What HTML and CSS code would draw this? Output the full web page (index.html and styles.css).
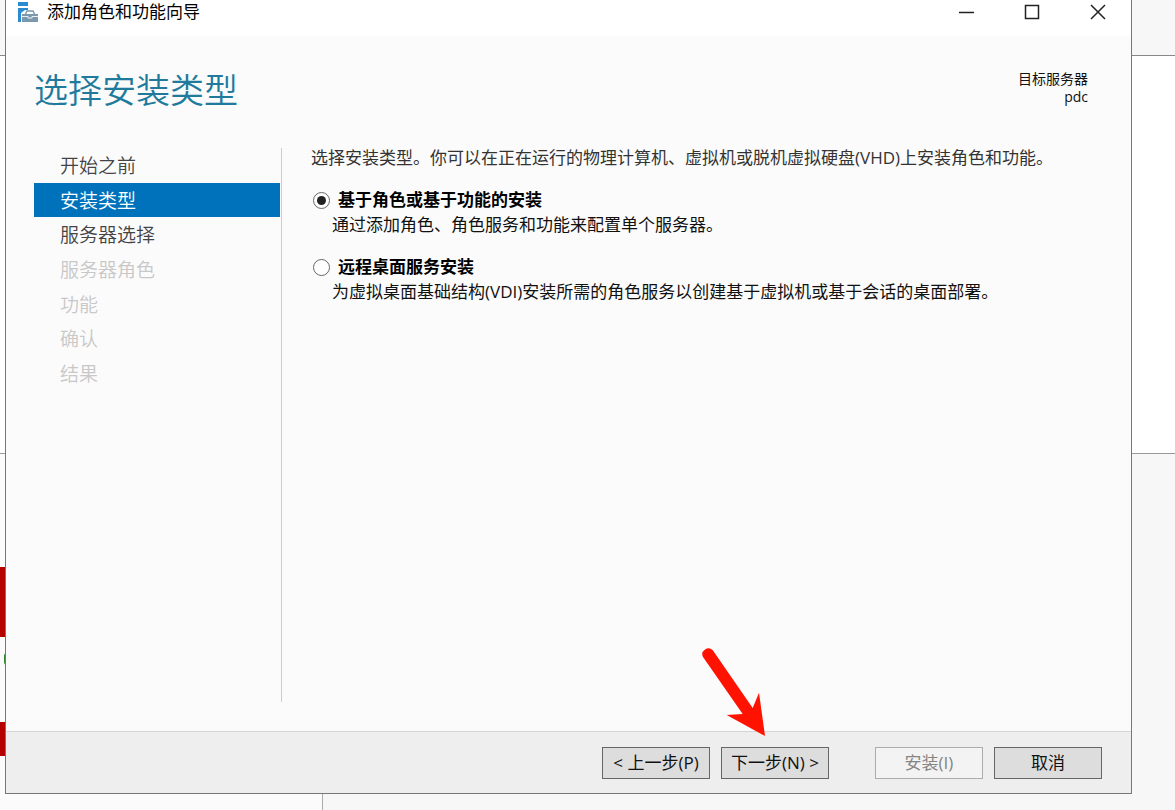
FILE: index.html
```html
<!DOCTYPE html>
<html lang="zh-CN">
<head>
<meta charset="utf-8">
<meta name="viewport" content="width=device-width, initial-scale=1">
<title>添加角色和功能向导</title>
<link rel="stylesheet" href="styles.css">
</head>
<body>
<div class="backdrop" aria-hidden="true">
  <div class="panel-top"></div>
  <div class="panel-middle"></div>
  <div class="panel-bottom">
    <div class="tiles">
      <span class="tile tile-large"></span>
      <span class="status-dot"></span>
      <span class="tile tile-small"></span>
    </div>
    <div class="panel-rest"></div>
  </div>
</div>
<main class="window">
  <header class="titlebar">
    <svg class="app-icon" width="22" height="22" viewBox="0 0 22 22" aria-hidden="true">
      <path fill="#2b8bd0" d="M1 1h10v4H1zM1 7h10v2H8L4 12v9H1z"/>
      <path fill="#7b98ae" d="M5 13h16v8H5z"/>
      <path fill="none" stroke="#7b98ae" stroke-width="1.500" d="M8.500 13l1.500-3h6l1.500 3"/>
      <path fill="none" stroke="#e8eff4" stroke-width="1" d="M5 15.500h6v1.500h4v-1.500h6"/>
    </svg>
    <span class="title">添加角色和功能向导</span>
    <div class="controls">
      <button type="button" class="control" aria-label="最小化"><svg width="16" height="16" viewBox="0 0 16 16"><path d="M1 8.500h15"/></svg></button>
      <button type="button" class="control" aria-label="最大化"><svg width="16" height="16" viewBox="0 0 16 16"><path d="M1.500 1.500h13v13h-13z"/></svg></button>
      <button type="button" class="control" aria-label="关闭"><svg width="16" height="16" viewBox="0 0 16 16"><path d="M1 1l14 14M15 1L1 15"/></svg></button>
    </div>
  </header>
  <div class="heading">
    <h1>选择安装类型</h1>
    <div class="target"><span>目标服务器</span><span>pdc</span></div>
  </div>
  <div class="body">
    <nav class="steps" aria-label="步骤">
      <a class="step" href="#before">开始之前</a>
      <a class="step current" href="#type" aria-current="step">安装类型</a>
      <a class="step" href="#server">服务器选择</a>
      <span class="step disabled">服务器角色</span>
      <span class="step disabled">功能</span>
      <span class="step disabled">确认</span>
      <span class="step disabled">结果</span>
    </nav>
    <section class="content">
      <p class="intro">选择安装类型。你可以在正在运行的物理计算机、虚拟机或脱机虚拟硬盘(VHD)上安装角色和功能。</p>
      <div class="option">
        <input class="radio" type="radio" name="type" id="role" aria-describedby="role-text" checked>
        <label for="role">基于角色或基于功能的安装</label>
        <p id="role-text">通过添加角色、角色服务和功能来配置单个服务器。</p>
      </div>
      <div class="option">
        <input class="radio" type="radio" name="type" id="rds" aria-describedby="rds-text">
        <label for="rds">远程桌面服务安装</label>
        <p id="rds-text">为虚拟桌面基础结构(VDI)安装所需的角色服务以创建基于虚拟机或基于会话的桌面部署。</p>
      </div>
    </section>
  </div>
  <footer class="actions">
    <div class="group">
      <button type="button" class="btn">&lt; 上一步(P)</button>
      <div class="pointed">
        <button type="button" class="btn">下一步(N) &gt;</button>
        <svg class="arrow" width="68" height="92" viewBox="0 0 68 92" aria-hidden="true"><path fill="#ff1200" d="M3 11A6 6 0 0 1 12.800 4.300L52.700 62L59 46.700L65 90L26.700 69L42.700 68Z"/></svg>
      </div>
    </div>
    <div class="group">
      <button type="button" class="btn" disabled>安装(I)</button>
      <button type="button" class="btn">取消</button>
    </div>
  </footer>
</main>
</body>
</html>
```

FILE: styles.css
```css
* {
  box-sizing: border-box;
}

body {
  margin: 0;
  min-height: 100vh;
  padding: 0 43px 16px 5px;
  display: flex;
  font-family: "Open Sans", "Noto Sans CJK SC", sans-serif;
  font-size: 17px;
  line-height: 24px;
  color: #111;
}

h1,
p {
  margin: 0;
}

/* Application behind the dialog */
.backdrop {
  position: fixed;
  inset: 0;
  z-index: -1;
  display: grid;
  grid-template-rows: 56px 398px 1fr;
  background: #fff;
}

.panel-top {
  background: #f7f7f7;
  border-bottom: 1px solid #888;
}

.panel-middle {
  border-bottom: 1px solid #999;
}

.panel-bottom {
  display: grid;
  grid-template-columns: 323px 1fr;
}

.tiles {
  display: flex;
  flex-direction: column;
  background: #fbfbfb;
  border-right: 1px solid #aaa;
}

.panel-rest {
  background: #f7f7f7;
}

.tile {
  background: #b50000;
}

.tile-large {
  height: 70px;
  margin-top: 113px;
}

.status-dot {
  width: 6px;
  height: 12px;
  margin: 16px 0 57px 4px;
  border-radius: 6px;
  background: #2e8b2e;
}

.tile-small {
  height: 34px;
}

/* Dialog */
.window {
  flex: 1;
  display: flex;
  flex-direction: column;
  background: #fbfbfb;
  border: 1px solid #777;
  border-top: 0;
}

.titlebar {
  display: flex;
  align-items: center;
  height: 36px;
  padding: 0 0 12px 11px;
  background: #fff;
}

.title {
  flex: 1;
  margin-left: 8px;
  color: #000;
}

.controls {
  display: flex;
}

.control {
  display: grid;
  place-items: center;
  width: 66px;
  height: 24px;
  padding: 0;
  border: 0;
  background: none;
}

.control path {
  fill: none;
  stroke: #222;
  stroke-width: 1.5;
}

.heading {
  display: flex;
  justify-content: space-between;
  padding: 30px 43px 0 28px;
  height: 112px;
}

h1 {
  font-size: 34px;
  font-weight: 350;
  line-height: 48px;
  color: #217a9b;
}

.target {
  display: flex;
  flex-direction: column;
  align-items: flex-end;
  padding-top: 4px;
  font-size: 14px;
  line-height: 18px;
}

.body {
  flex: 1;
  display: flex;
  padding: 0 28px 29px;
}

.steps {
  display: grid;
  grid-auto-rows: 1fr;
  height: 242px;
  width: 246px;
  flex: none;
}

.step {
  display: flex;
  align-items: center;
  padding: 2px 0 0 26px;
  font-size: 19px;
  font-weight: 350;
  color: #444;
  text-decoration: none;
}

.current {
  background: #0072bc;
  color: #fff;
}

.disabled {
  color: #c8c8c8;
}

.content {
  flex: 1;
  margin-left: 1px;
  padding-left: 29px;
  border-left: 1px solid #ccc;
}

.intro {
  margin: -2px 0 18px;
  color: #333;
}

.option {
  display: grid;
  grid-template-columns: 18px 1fr;
  column-gap: 7px;
  align-items: center;
  margin: 0 0 17px 2px;
}

.option label {
  font-weight: 700;
  color: #000;
}

.option p {
  grid-column: 1 / -1;
  padding-left: 19px;
  line-height: 26px;
}

.radio {
  appearance: none;
  display: grid;
  place-items: center;
  width: 17px;
  height: 17px;
  margin: 0;
  border: 1px solid #666;
  border-radius: 50%;
  background: #fff;
}

.radio:checked::before {
  content: "";
  width: 9px;
  height: 9px;
  border-radius: 50%;
  background: #222;
}

.actions {
  display: flex;
  justify-content: flex-end;
  gap: 46px;
  padding: 15px 29px 14px;
  background: #eee;
  border-top: 1px solid #d5d5d5;
}

.group {
  display: flex;
  gap: 11px;
}

.pointed {
  position: relative;
}

.btn {
  width: 108px;
  height: 32px;
  padding: 0;
  border: 1px solid #666;
  background: #ddd;
  color: #111;
  font: inherit;
}

.btn:disabled {
  border-color: #a9adad;
  background: #f3f3f3;
  color: #858585;
}

.arrow {
  position: absolute;
  left: -21px;
  top: -101px;
  pointer-events: none;
}
```
